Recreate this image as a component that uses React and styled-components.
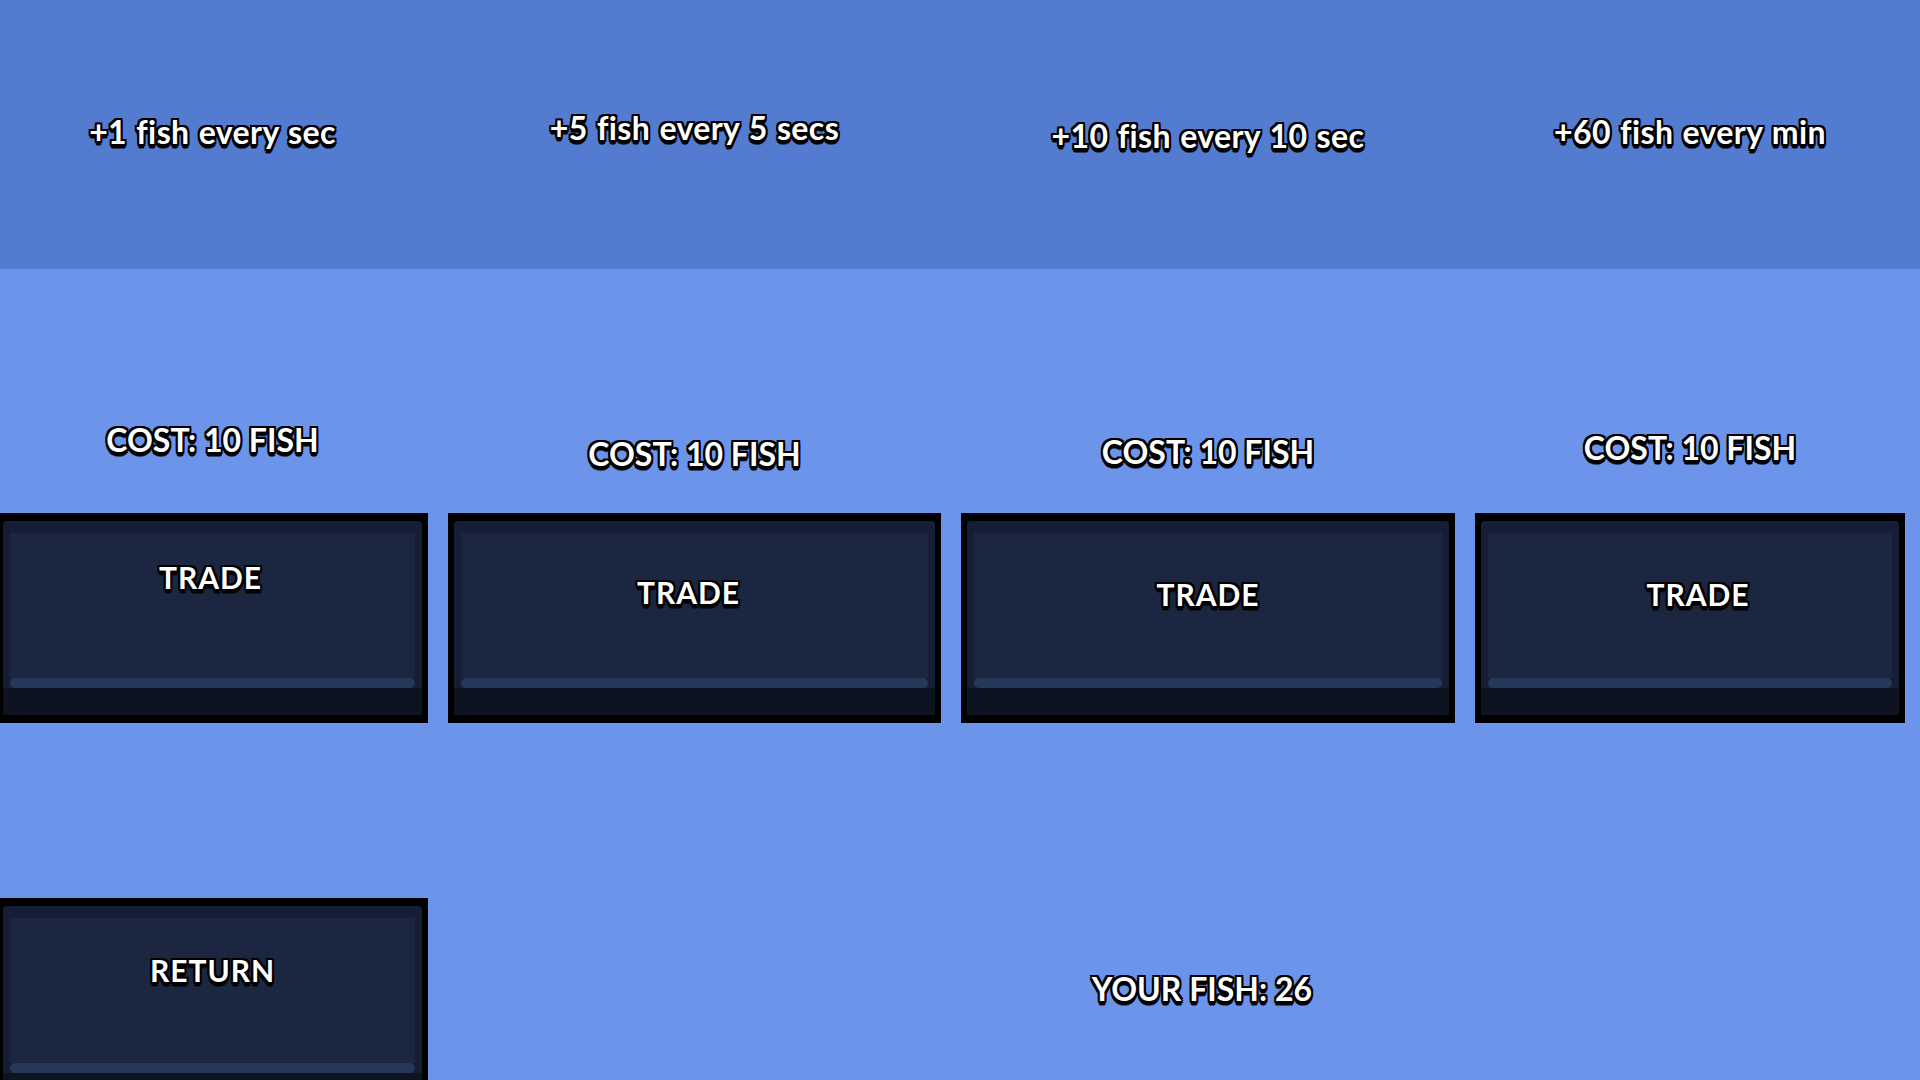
import React from "react";
import styled, { createGlobalStyle } from "styled-components";

const GlobalStyle = createGlobalStyle`
  html, body {
    margin: 0;
    padding: 0;
    width: 1920px;
    height: 1080px;
    overflow: hidden;
    background: #6b94ea;
  }
  * { box-sizing: border-box; }
`;

const outline = `
  -2px 0 0 #000, 2px 0 0 #000, 0 -2px 0 #000, 0 2px 0 #000,
  -2px -2px 0 #000, 2px -2px 0 #000, -2px 2px 0 #000, 2px 2px 0 #000,
  -1px 4px 0 #000, 1px 4px 0 #000, 0 5px 0 rgba(0, 0, 0, 0.55)
`;

const Screen = styled.div`
  width: 1920px;
  height: 1080px;
  overflow: hidden;
  display: flex;
  flex-direction: column;
  font-family: Lato, "Open Sans", sans-serif;
  font-weight: 700;
  color: #fff;
`;

const Columns = styled.div`
  display: grid;
  grid-template-columns: 431px 493px 494px 430px;
  column-gap: 20px;
  margin-left: -3px;
  width: 1908px;
`;

const TopBand = styled.header`
  flex-shrink: 0;
  background: #537bcf;
  height: 269px;
`;

const TopRow = styled(Columns)`
  height: 100%;
  align-items: center;
`;

const RateLabel = styled.div`
  text-align: center;
  font-size: 32px;
  line-height: 36px;
  letter-spacing: 0.4px;
  word-spacing: 1px;
  text-shadow: ${outline};
  transform: translateY(${(p) => p.$shift}px);
  white-space: nowrap;
`;

const Shop = styled.main`
  flex-shrink: 0;
  background: #6b94ea;
  display: flex;
  flex-direction: column;
`;

const ShopRow = styled(Columns)`
  align-items: end;
`;

const Offer = styled.div`
  display: flex;
  flex-direction: column;
  height: 454px;
`;

const CostSlot = styled.div`
  flex: 1;
  display: flex;
  align-items: flex-end;
  justify-content: center;
  padding-bottom: ${(p) => p.$gap}px;
`;

const CostLabel = styled.div`
  font-size: 32px;
  line-height: 36px;
  text-shadow: ${outline};
  white-space: nowrap;
`;

const Button = styled.button`
  all: unset;
  box-sizing: border-box;
  display: flex;
  flex-direction: column;
  height: 210px;
  width: 100%;
  background: #000;
  padding: 8px 6px;
  cursor: pointer;
  flex-shrink: 0;
`;

const Frame = styled.div`
  flex: 1;
  display: flex;
  flex-direction: column;
  background: #151e34;
  border-radius: 4px 4px 0 0;
  padding: 12px 7px 0;
`;

const Face = styled.div`
  flex: 1;
  background: #1b2640;
  display: flex;
  justify-content: center;
  align-items: flex-start;
  padding-top: ${(p) => p.$labelTop}px;
`;

const Highlight = styled.div`
  height: 10px;
  background: #27375a;
  border-radius: 5px;
`;

const Base = styled.div`
  height: 27px;
  margin: 0 -7px;
  background: #0e1322;
`;

const ButtonLabel = styled.span`
  font-size: 30px;
  line-height: 32px;
  letter-spacing: 1px;
  text-shadow: ${outline};
  transform: translateX(${(p) => p.$nudge || 0}px);
`;

const FooterRow = styled(Columns)`
  margin-top: 175px;
  align-items: start;
`;

const FishCount = styled.div`
  grid-column: 3;
  text-align: center;
  padding-top: 73px;
  font-size: 32px;
  line-height: 36px;
  text-shadow: ${outline};
  transform: translateX(-6px);
`;

const GameButton = ({ label, labelTop, nudge }) => (
  <Button>
    <Frame>
      <Face $labelTop={labelTop}>
        <ButtonLabel $nudge={nudge}>{label}</ButtonLabel>
      </Face>
      <Highlight />
      <Base />
    </Frame>
  </Button>
);

const offers = [
  { rate: "+1 fish every sec", shift: -3, gap: 55, labelTop: 28, nudge: -2 },
  { rate: "+5 fish every 5 secs", shift: -7, gap: 41, labelTop: 43, nudge: -6 },
  { rate: "+10 fish every 10 sec", shift: 1, gap: 43, labelTop: 45, nudge: 0 },
  { rate: "+60 fish every min", shift: -3, gap: 47, labelTop: 45, nudge: 8 },
];

export default function App() {
  return (
    <>
      <GlobalStyle />
      <Screen>
        <TopBand>
          <TopRow>
            {offers.map((o) => (
              <RateLabel key={o.rate} $shift={o.shift}>
                {o.rate}
              </RateLabel>
            ))}
          </TopRow>
        </TopBand>
        <Shop>
          <ShopRow>
            {offers.map((o) => (
              <Offer key={o.rate}>
                <CostSlot $gap={o.gap}>
                  <CostLabel>COST: 10 FISH</CostLabel>
                </CostSlot>
                <GameButton label="TRADE" labelTop={o.labelTop} nudge={o.nudge} />
              </Offer>
            ))}
          </ShopRow>
          <FooterRow>
            <GameButton label="RETURN" labelTop={36} />
            <FishCount>YOUR FISH: 26</FishCount>
          </FooterRow>
        </Shop>
      </Screen>
    </>
  );
}
